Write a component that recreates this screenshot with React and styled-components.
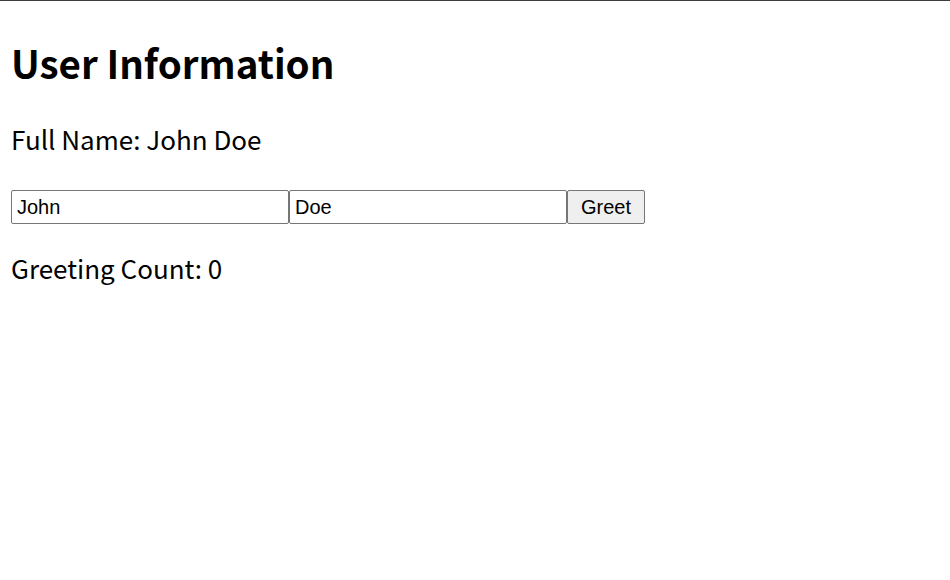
import React, { useState } from "react";
import styled, { createGlobalStyle } from "styled-components";

const Global = createGlobalStyle`
  html, body { margin: 0; padding: 0; background: #fff; }
  body { font-family: "Noto Sans CJK SC", "Noto Sans", sans-serif; color: #000; }
`;

const Page = styled.div`
  border-top: 1px solid #3c3c3c;
  padding: 0 11px;
`;

const Title = styled.h1`
  font-size: 38.5px;
  font-weight: 700;
  margin: 38px 0 0;
  line-height: 46px;
`;

const Line = styled.p`
  font-size: 26px;
  margin: ${(p) => p.$top || 0}px 0 0;
  line-height: 36px;
`;

const Row = styled.div`
  display: flex;
  margin-top: 33px;
`;

const Field = styled.input`
  width: 278px;
  height: 34px;
  box-sizing: border-box;
  font-family: "Liberation Sans", Arial, sans-serif;
  font-size: 20px;
  padding: 1px 5px;
  border: 1px solid #767676;
  border-radius: 2px;
  margin: 0;
  color: #000;
`;

const Button = styled.button`
  width: 78px;
  height: 34px;
  box-sizing: border-box;
  font-family: "Liberation Sans", Arial, sans-serif;
  font-size: 20px;
  border: 1px solid #767676;
  border-radius: 2px;
  background: #efefef;
  color: #000;
  margin: 0;
  padding: 1px 6px;
`;

export default function App() {
  const [first, setFirst] = useState("John");
  const [last, setLast] = useState("Doe");
  const [count, setCount] = useState(0);
  return (
    <Page>
      <Global />
      <Title>User Information</Title>
      <Line $top={36}>Full Name: {first} {last}</Line>
      <Row>
        <Field value={first} onChange={(e) => setFirst(e.target.value)} />
        <Field value={last} onChange={(e) => setLast(e.target.value)} />
        <Button onClick={() => setCount(count + 1)}>Greet</Button>
      </Row>
      <Line $top={26}>Greeting Count: {count}</Line>
    </Page>
  );
}
